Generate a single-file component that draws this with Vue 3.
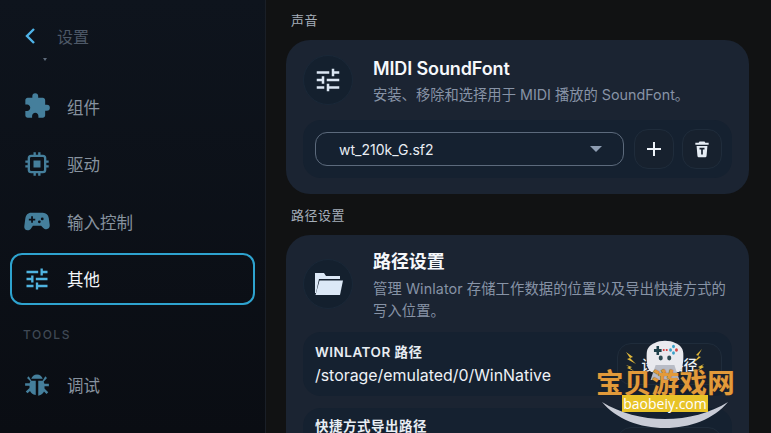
<script setup>
const nav = [
  { id: 'puzzle', label: '组件' },
  { id: 'chip', label: '驱动' },
  { id: 'pad', label: '输入控制' },
  { id: 'tune', label: '其他', active: true },
]
</script>

<template>
  <div class="app">
    <aside class="side">
      <header class="head">
        <svg class="back" viewBox="0 0 14 20" width="14" height="20"><path d="M11 3 4 10l7 7" fill="none" stroke="#4fb3e8" stroke-width="2.4"/></svg>
        <span class="head-t">设置</span>
      </header>
      <div class="tick"></div>
      <nav class="nav">
        <div v-for="n in nav" :key="n.id" class="item" :class="{ on: n.active }">
          <svg class="ico" viewBox="0 0 24 24" width="28" height="28">
            <path v-if="n.id === 'puzzle'" fill="#457f9c" d="M20.5 11H19V7c0-1.100-.9-2-2-2h-4V3.500a2.500 2.500 0 0 0-5 0V5H4c-1.100 0-2 .9-2 2v3.800h1.500c1.500 0 2.700 1.200 2.700 2.700S5 16.200 3.500 16.200H2V20c0 1.100.9 2 2 2h3.800v-1.500c0-1.500 1.200-2.700 2.700-2.700s2.700 1.200 2.700 2.700V22H17c1.100 0 2-.9 2-2v-4h1.500a2.500 2.500 0 0 0 0-5z"/>
            <path v-else-if="n.id === 'chip'" fill="#457f9c" fill-rule="evenodd" d="M9 2h2v2h2V2h2v2h2a3 3 0 0 1 3 3v2h2v2h-2v2h2v2h-2v2a3 3 0 0 1-3 3h-2v2h-2v-2h-2v2H9v-2H7a3 3 0 0 1-3-3v-2H2v-2h2v-2H2V9h2V7a3 3 0 0 1 3-3h2V2zM7 6a1 1 0 0 0-1 1v10a1 1 0 0 0 1 1h10a1 1 0 0 0 1-1V7a1 1 0 0 0-1-1H7zm2 3h6v6H9V9z"/>
            <path v-else-if="n.id === 'pad'" fill="#457f9c" fill-rule="evenodd" d="M7 5h10c2.800 0 4.600 1.800 5.100 4.500l.8 6c.3 2-1 3.500-2.900 3.500-1 0-1.900-.4-2.600-1.100L15.500 16h-7l-1.900 2.900C5.900 19.600 5 20 4 20c-1.900 0-3.200-1.500-2.900-3.500l.8-6C2.400 6.800 4.200 5 7 5zm0 3v2H5v1.500h2v2h1.500v-2h2V10h-2V8H7zm9.500 1a1.200 1.200 0 1 0 0 2.400 1.200 1.200 0 0 0 0-2.400zm-2.500 2.500a1.200 1.200 0 1 0 0 2.400 1.200 1.200 0 0 0 0-2.400z"/>
            <path v-else fill="#4fb3e0" d="M3 17v2h6v-2H3zM3 5v2h10V5H3zm10 16v-2h8v-2h-8v-2h-2v6h2zM7 9v2H3v2h4v2h2V9H7zm14 4v-2H11v2h10zm-6-4h2V7h4V5h-4V3h-2v6z"/>
          </svg>
          <span class="label">{{ n.label }}</span>
        </div>
      </nav>
      <div class="sect">TOOLS</div>
      <div class="item debug">
        <svg class="ico" viewBox="0 0 24 24" width="30" height="30"><path fill="#457f9c" d="M12 3.500c-2.300 0-4.100 1.500-4.600 3.500h9.200C16.100 5 14.300 3.500 12 3.500zM5.400 5 4 6.400l2.700 2.500C6.400 9.400 6.200 10 6.100 10.500H2.500v2h3.500v1.800l-3 2.900 1.400 1.400 2-1.900c.6 1.500 2 2.800 4.600 3.300V8.500H7.500L5.400 5zm13.200 0-2.100 3.500H13v12c2.600-.5 4-1.800 4.600-3.300l2 1.900 1.400-1.400-3-2.900v-1.800h3.500v-2h-3.600c-.1-.5-.3-1.100-.6-1.600L20 6.400 18.600 5z"/></svg>
        <span class="label">调试</span>
      </div>
    </aside>

    <main class="main">
      <div class="sec-t">声音</div>
      <section class="card">
        <div class="card-h">
          <div class="circle">
            <svg viewBox="0 0 24 24" width="30" height="30"><path fill="#dbe6f3" d="M3 17v2h6v-2H3zM3 5v2h10V5H3zm10 16v-2h8v-2h-8v-2h-2v6h2zM7 9v2H3v2h4v2h2V9H7zm14 4v-2H11v2h10zm-6-4h2V7h4V5h-4V3h-2v6z"/></svg>
          </div>
          <div class="txt">
            <div class="title">MIDI SoundFont</div>
            <div class="desc">安装、移除和选择用于 MIDI 播放的 SoundFont。</div>
          </div>
        </div>
        <div class="panel row1">
          <div class="select">
            <span>wt_210k_G.sf2</span>
            <i class="caret"></i>
          </div>
          <button class="sq">
            <svg viewBox="0 0 24 24" width="24" height="24"><path fill="#eef3f9" d="M11 5h2v6h6v2h-6v6h-2v-6H5v-2h6z"/></svg>
          </button>
          <button class="sq">
            <svg viewBox="0 0 24 24" width="20" height="20"><path fill="#e6edf5" fill-rule="evenodd" d="M9 3h6l1 1.500h4v2.500H4V4.500h4L9 3zM5.500 8.500h13L17.500 20c-.1 1.100-1 2-2.100 2H8.600c-1.100 0-2-.9-2.100-2l-1-11.500zm3.500 2v2h2v6h2v-6h2v-2H9z"/></svg>
          </button>
        </div>
      </section>

      <div class="sec-t second">路径设置</div>
      <section class="card">
        <div class="card-h path-h">
          <div class="circle">
            <svg viewBox="0 0 30 24" width="30" height="24">
              <path fill="#dce8f6" d="M2 1h9l2 3h14v3H6L3 21H2z"/>
              <path fill="#dce8f6" d="M6.500 8.500H30L27 23H2.500z"/>
            </svg>
          </div>
          <div class="txt">
            <div class="title cjk">路径设置</div>
            <div class="desc wrap">管理 Winlator 存储工作数据的位置以及导出快捷方式的写入位置。</div>
          </div>
        </div>
        <div class="panel path">
          <div class="p-txt">
            <div class="p-l">WINLATOR 路径</div>
            <div class="p-v">/storage/emulated/0/WinNative</div>
          </div>
          <button class="set">设置路径</button>
        </div>
        <div class="panel path two">
          <div class="p-txt">
            <div class="p-l">快捷方式导出路径</div>
          </div>
          <button class="set">设置路径</button>
        </div>
      </section>
    </main>

    <div class="mark">
      <svg class="pad" viewBox="0 0 82 42" width="82" height="42">
        <g transform="translate(6.150 0) scale(.85 1)">
          <path d="M29 3c6-3 18-3 24 0 6 2 9 5 9.500 10 .5 8-.5 17-5.500 19-4 1-6-4-8-7H33c-2 3-4 8-8 7-5-2-6-11-5.500-19C20 8 23 5 29 3z" fill="#e9e9ee"/>
          <path d="M30 25h22l6 15H24z" fill="#b9bcc6"/>
          <path d="M28 9h3V6h3v3h3v3h-3v3h-3v-3h-3z" fill="#1d3f49"/>
          <circle cx="51" cy="6.500" r="1.700" fill="#3aa0c9"/><circle cx="54.500" cy="10" r="1.700" fill="#d64545"/><circle cx="47.500" cy="10" r="1.700" fill="#3aa0c9"/><circle cx="51" cy="13" r="1.700" fill="#3aa0c9"/>
          <circle cx="36" cy="18" r="2.400" fill="#2c4a52"/><circle cx="46" cy="18" r="2.400" fill="#2c4a52"/>
          <rect x="38.500" y="9" width="2" height="2" fill="#d64545"/><rect x="42" y="9" width="2" height="2" fill="#d64545"/>
        </g>
        <path d="M2 12l7 5-3 1 6 6-9-5 3-1zM2 25l6 2-2 1 4 3-7-3 2-1zM78 9l-6 6 3 1-6 7 8-6-3-1zM80 24l-6 3 2 1-3 3 7-4-2-1z" fill="#e3b93a"/>
      </svg>
      <div class="mark-t">宝贝游戏网</div>
      <svg class="arc" viewBox="0 0 126 26" width="126" height="26" preserveAspectRatio="none"><path d="M0 0c18 11 40 17 63 17s45-6 63-17c-14 17-38 26-63 26S14 17 0 0z" fill="#c9ccd6"/></svg>
      <div class="mark-u">baobeiy.com</div>
    </div>
  </div>
</template>

<style>
html, body { margin: 0; background: #111; }
</style>

<style scoped>
.app {
  width: 771px; height: 433px; overflow: hidden; display: flex; position: relative;
  background: #111213; color: #fff;
  font-family: Inter, "Noto Sans CJK SC", sans-serif;
}
.side {
  width: 266px; flex: none; box-sizing: border-box; padding: 0 10px;
  background: linear-gradient(180deg, #0e141d 0%, #0a0d13 100%);
  border-right: 1px solid #1a1f27;
}
.head { display: flex; align-items: center; height: 72px; padding-left: 13px; }
.back { margin-right: 20px; }
.head-t { font-size: 16px; color: #4d5867; margin-bottom: 1px; }
.tick { width: 0; height: 0; margin: -14px 0 0 33px; border: 2.500px solid transparent; border-top: 3px solid #5e6b7a; border-bottom: 0; }
.nav { display: flex; flex-direction: column; gap: 5.670px; margin-top: 19px; }
.item { height: 52px; display: flex; align-items: center; padding-left: 13px; box-sizing: border-box; border-radius: 12px; }
.item.on { border: 2px solid #2ea3cf; padding-left: 11px; }
.item .ico { flex: none; margin-right: 16px; }
.label { font-size: 16.500px; color: #87929f; margin-top: 1px; }
.on .label { color: #f3f6fa; }
.sect { margin: 22px 0 0 13px; font-size: 12px; font-weight: 500; letter-spacing: 1.500px; color: #3f4854; line-height: 16px; }
.debug { margin-top: 16px; padding-left: 12px; }
.debug .ico { margin-right: 15px; }
.main { flex: 1; min-width: 0; padding: 12px 22px 0 20px; box-sizing: border-box; }
.sec-t { font-size: 13px; line-height: 17px; color: #a5aeb9; padding-left: 5px; letter-spacing: .5px; }
.sec-t.second { margin-top: 13px; }
.card { margin-top: 11px; background: #1b2432; border-radius: 24px; padding: 15px 17px 16px 17px; }
.card-h { display: flex; gap: 19px; align-items: flex-start; height: 65px; padding-left: 1px; box-sizing: border-box; }
.path-h { height: 82px; padding-top: 9px; }
.circle { width: 50px; height: 50px; margin-left: -1px; margin-right: 1px; border-radius: 50%; flex: none; box-sizing: border-box; background: #14202e; border: 1px solid #1a2838; display: flex; align-items: center; justify-content: center; }
.txt { flex: 1; min-width: 0; }
.title { font-size: 18px; font-weight: 600; line-height: 26px; color: #f6f8fb; margin-top: 1px; letter-spacing: -.12px; }
.title.cjk { margin-top: -10px; }
.desc { font-size: 14.300px; line-height: 22px; color: #8793a6; margin-top: 2px; white-space: nowrap; }
.desc.wrap { white-space: normal; margin-top: 3px; width: 358px; letter-spacing: .1px; }
.panel { background: #152130; border-radius: 18px; }
.row1 { height: 58px; display: flex; align-items: center; padding: 0 10px 0 12px; box-sizing: border-box; }
.select { width: 309px; height: 34px; box-sizing: border-box; border: 1px solid #5c6a7c; border-radius: 12px; display: flex; align-items: center; justify-content: space-between; padding: 0 21px 0 23px; font-size: 14px; color: #e9eef4; margin-right: 10px; }
.caret { width: 0; height: 0; border: 6.500px solid transparent; border-top: 6.500px solid #8e9db2; border-bottom: 0; }
.sq { width: 40px; height: 40px; flex: none; padding: 0; background: #17212e; border: 1px solid #1f2c3b; border-radius: 14px; display: flex; align-items: center; justify-content: center; margin-right: 8px; }
.sq:last-child { margin-right: 0; }
.path { height: 64px; display: flex; align-items: center; justify-content: space-between; padding: 0 10px 0 12px; box-sizing: border-box; margin-bottom: 12px; }
.p-txt { align-self: flex-start; padding-top: 11px; }
.p-l { font-size: 13.500px; font-weight: 600; line-height: 18px; color: #e8edf3; letter-spacing: .5px; }
.p-v { font-size: 15.900px; line-height: 25px; color: #eef2f7; margin-top: 2px; }
.two { height: 80px; }
.two .p-txt { padding-top: 9px; }
.set { width: 105px; height: 42px; background: #17212e; border: 1px solid #1f2c3b; border-radius: 14px; color: #eef2f7; font: 500 14px Inter, "Noto Sans CJK SC", sans-serif; padding: 0; }
.mark { position: absolute; left: 596px; top: 338px; width: 142px; height: 95px; }
.pad { position: absolute; left: 28px; top: 2px; }
.mark-t { position: absolute; left: 0; top: 28px; width: 142px; font-size: 27.500px; line-height: 34px; letter-spacing: .3px; white-space: nowrap; font-weight: 700; color: #e29a3a; text-shadow: 0 0 1px #5b3410; }
.arc { position: absolute; left: 6px; top: 64px; }
.mark-u { position: absolute; left: 26px; top: 57px; width: 86px; height: 17px; background: #e8c327; color: #fff; font: 500 14px/17px "Open Sans", sans-serif; text-align: center; }
</style>
